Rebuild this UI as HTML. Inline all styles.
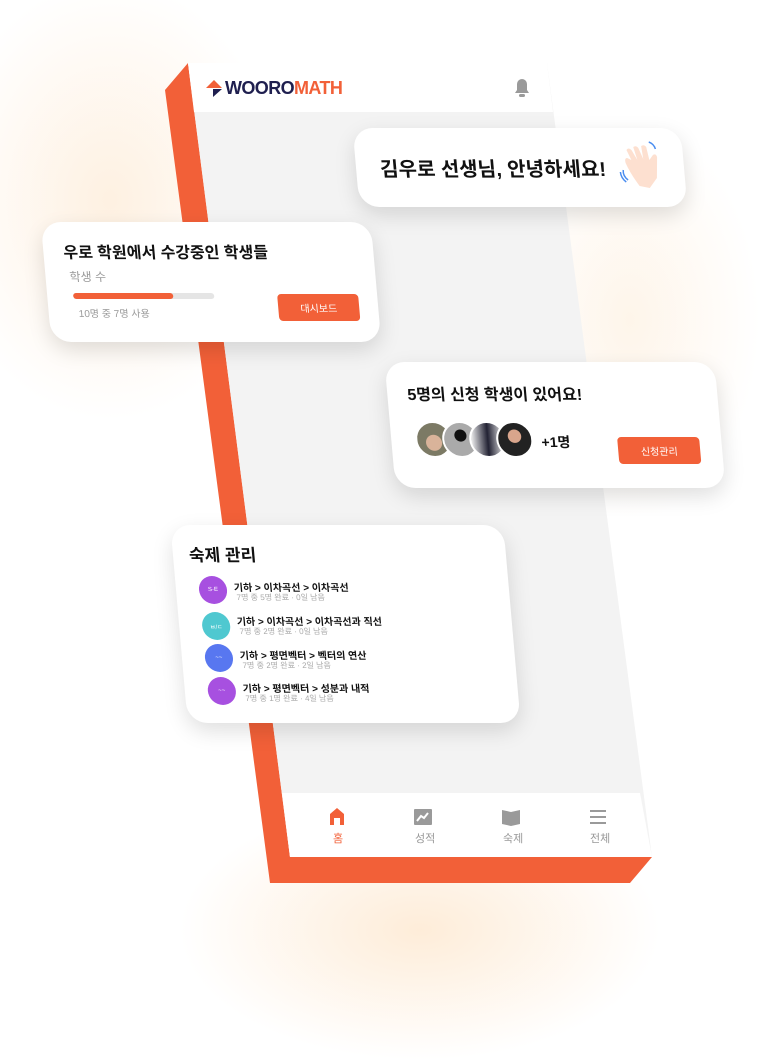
<!DOCTYPE html>
<html><head><meta charset="utf-8"><style>
*{margin:0;padding:0;box-sizing:border-box}
body{width:765px;height:1059px;position:relative;overflow:hidden;background:#fff;font-family:"Liberation Sans","Noto Sans CJK KR",sans-serif;color:#111}
.glow{position:absolute;inset:0;background:
radial-gradient(ellipse 170px 220px at 110px 200px,rgba(253,214,170,.35),rgba(255,255,255,0) 100%),
radial-gradient(ellipse 240px 130px at 420px 930px,rgba(253,214,170,.45),rgba(255,255,255,0) 100%),
radial-gradient(ellipse 130px 200px at 630px 320px,rgba(253,222,185,.3),rgba(255,255,255,0) 100%)}
svg.ph{position:absolute;left:0;top:0}
.abs{position:absolute;white-space:nowrap}
.card{position:absolute;background:#fff;border-radius:20px;transform:skewX(5deg);box-shadow:0 8px 22px rgba(0,0,0,.13)}
.btn{position:absolute;background:#f26038;color:#fff;border-radius:4px;font-size:10px;display:flex;align-items:center;justify-content:center}
.ic{position:absolute;width:28px;height:28px;border-radius:50%;color:#fff;font-size:6px;display:flex;align-items:center;justify-content:center}
.t{position:absolute;font-size:10px;font-weight:bold;white-space:nowrap;left:58px}
.s{position:absolute;font-size:8px;color:#aaa;white-space:nowrap;left:60px}
.av{position:absolute;top:59px;width:37px;height:37px;border-radius:50%;border:2px solid #fff}
.nl{position:absolute;font-size:11px;color:#999;top:830px}
</style></head><body>
<div class="glow"></div>
<svg class="ph" width="765" height="1059">
<polygon points="165,90 188,63 290,857 652,857 630,883 270,883" fill="#f26038"/>
<polygon points="188,63 547,63 652,857 290,857" fill="#f3f3f3"/>
<polygon points="188,63 547,63 553,112 194,112" fill="#fff"/>
<polygon points="282,793 640,793 652,857 290,857" fill="#fff"/>
<polygon points="206,88 214,80 222,88" fill="#f26038"/>
<polygon points="213,89 222,89 213,97" fill="#1f1f4f"/>
<path d="M515,93 L529,93 L527,90 L527,84 A5,5 0 0 0 517,84 L517,90 Z" fill="#9a9a9a"/>
<rect x="519" y="94" width="6" height="3" rx="1.5" fill="#9a9a9a"/>
<path d="M330,825 L330,814 L337,808 L344,814 L344,825 L340,825 L340,818 L334,818 L334,825 Z" fill="#f26038"/>
<rect x="414" y="809" width="18" height="16" rx="1" fill="#9a9a9a"/>
<path d="M417,821 L421,816 L424,818 L428,813" stroke="#fff" stroke-width="2" fill="none"/>
<path d="M502,810 L511,812 L520,810 L520,824 L511,826 L502,824 Z" fill="#9a9a9a"/>
<rect x="590" y="810" width="16" height="2" fill="#9a9a9a"/><rect x="590" y="816" width="16" height="2" fill="#9a9a9a"/><rect x="590" y="822" width="16" height="2" fill="#9a9a9a"/>
</svg>
<div class="abs" style="left:225px;top:78px;font-size:18px;font-weight:bold;letter-spacing:-0.6px"><span style="color:#1f1f4f">WOORO</span><span style="color:#f26038">MATH</span></div>
<div class="nl" style="left:333px;color:#f26038">홈</div>
<div class="nl" style="left:415px">성적</div>
<div class="nl" style="left:503px">숙제</div>
<div class="nl" style="left:590px">전체</div>

<div class="card" style="left:356px;top:128px;width:328px;height:79px">
<div class="abs" style="left:24px;top:25px;font-size:20px;font-weight:bold">김우로 선생님, 안녕하세요!</div>
<svg class="abs" style="left:262px;top:10px" width="50" height="50"><path d="M14,22 L10,12 Q12,9 15,12 L20,22 L17,9 Q20,7 22,10 L26,21 L25,8 Q28,6 30,9 L32,22 L36,17 Q39,15 40,19 L38,40 L30,50 L20,48 Q12,36 8,25 Q7,20 10,20 Z" fill="#fde0d0"/><path d="M5,32 Q4,38 9,42 M2,34 Q2,40 7,44" stroke="#4a8df0" stroke-width="1.5" fill="none"/><path d="M33,4 Q38,6 39,11" stroke="#4a8df0" stroke-width="1.5" fill="none"/></svg>
</div>

<div class="card" style="left:46px;top:222px;width:330px;height:120px">
<div class="abs" style="left:20px;top:17px;font-size:16px;font-weight:bold">우로 학원에서 수강중인 학생들</div>
<div class="abs" style="left:24px;top:46px;font-size:12px;color:#999">학생 수</div>
<div class="abs" style="left:26px;top:71px;width:141px;height:6px;border-radius:3px;background:#e5e5e5"><div style="width:100px;height:6px;border-radius:3px;background:#f26038"></div></div>
<div class="abs" style="left:30px;top:83px;font-size:10px;color:#999">10명 중 7명 사용</div>
<div class="btn" style="left:230px;top:72px;width:81px;height:27px">대시보드</div>
</div>

<div class="card" style="left:390px;top:362px;width:330px;height:126px">
<div class="abs" style="left:20px;top:19px;font-size:16px;font-weight:bold">5명의 신청 학생이 있어요!</div>
<div class="av" style="left:24px;background:radial-gradient(circle at 50% 60%,#d9b39a 30%,#7c7a65 32%)"></div>
<div class="av" style="left:51px;background:radial-gradient(circle at 50% 38%,#111 22%,#aaa 24%)"></div>
<div class="av" style="left:78px;background:linear-gradient(90deg,#eee,#223 50%,#eee)"></div>
<div class="av" style="left:105px;background:radial-gradient(circle at 50% 40%,#d9a58c 25%,#222 27%)"></div>
<div class="abs" style="left:150px;top:70px;font-size:14px;font-weight:bold">+1명</div>
<div class="btn" style="left:226px;top:75px;width:82px;height:27px">신청관리</div>
</div>

<div class="card" style="left:179px;top:525px;width:333px;height:198px">
<div class="abs" style="left:16px;top:16px;font-size:17px;font-weight:bold">숙제 관리</div>
<div class="ic" style="left:23px;top:51px;background:#a750e0">S·E</div>
<div class="t" style="top:54px">기하 &gt; 이차곡선 &gt; 이차곡선</div><div class="s" style="top:67px">7명 중 5명 완료 · 0일 남음</div>
<div class="ic" style="left:23px;top:87px;background:#4fc8d0">ㅂ/ㄷ</div>
<div class="t" style="top:88px">기하 &gt; 이차곡선 &gt; 이차곡선과 직선</div><div class="s" style="top:101px">7명 중 2명 완료 · 0일 남음</div>
<div class="ic" style="left:23px;top:119px;background:#5877f0">~~</div>
<div class="t" style="top:122px">기하 &gt; 평면벡터 &gt; 벡터의 연산</div><div class="s" style="top:135px">7명 중 2명 완료 · 2일 남음</div>
<div class="ic" style="left:23px;top:152px;background:#a750e0">~~</div>
<div class="t" style="top:155px">기하 &gt; 평면벡터 &gt; 성분과 내적</div><div class="s" style="top:168px">7명 중 1명 완료 · 4일 남음</div>
</div>
</body></html>
